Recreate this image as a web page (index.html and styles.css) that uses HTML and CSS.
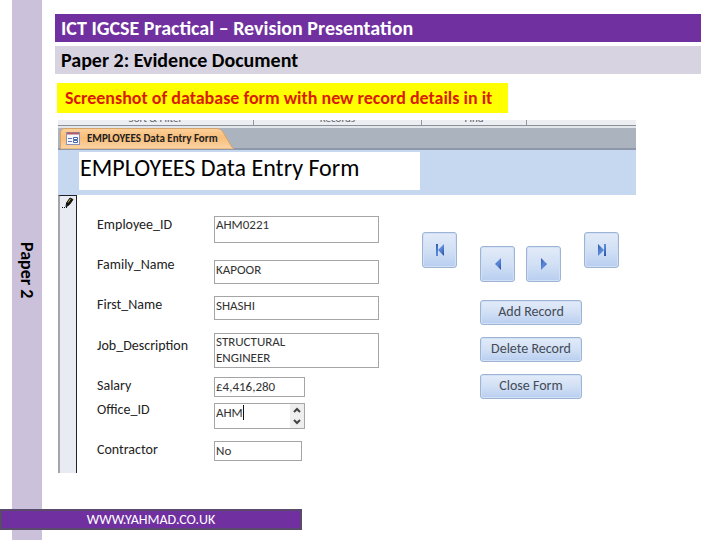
FILE: index.html
```html
<!DOCTYPE html>
<html lang="en">
<head>
<meta charset="utf-8">
<title>ICT IGCSE Practical – Revision Presentation</title>
<link rel="stylesheet" href="styles.css">
</head>
<body>
<div class="slide">
  <aside class="rail"><span>Paper 2</span></aside>
  <main class="content">
    <h1 class="bar bar-title">ICT IGCSE Practical – Revision Presentation</h1>
    <h2 class="bar bar-sub">Paper 2: Evidence Document</h2>
    <p class="note">Screenshot of database form with new record details in it</p>
    <section class="window">
      <div class="ribbon">
        <span class="group group-sort">Sort &amp; Filter</span>
        <span class="group group-records">Records</span>
        <span class="group group-find">Find</span>
      </div>
      <div class="tabs">
        <div class="tab">
          <svg class="tab-shape" viewBox="0 0 174 21" preserveAspectRatio="none" aria-hidden="true">
            <defs>
              <linearGradient id="tabfill" x1="0" y1="0" x2="0" y2="1">
                <stop offset="0" stop-color="#fbd09a"/><stop offset=".45" stop-color="#f8bd79"/><stop offset="1" stop-color="#fbd5a6"/>
              </linearGradient>
              <linearGradient id="arrowfill" x1="0" y1="0" x2="1" y2="1">
                <stop offset="0" stop-color="#2f58ac"/><stop offset=".5" stop-color="#5d8bdc"/><stop offset="1" stop-color="#274d9c"/>
              </linearGradient>
            </defs>
            <path d="M.5 21V5Q.5.5 5 .5H157Q161 .5 163 4L170 16Q172 20 174 21Z" fill="url(#tabfill)" stroke="#d6a36a"/>
          </svg>
          <svg class="tab-icon" viewBox="0 0 14 14" aria-hidden="true">
            <rect x=".5" y=".5" width="13" height="12" fill="#f5f7fc" stroke="#8d91b5"/>
            <path d="M1 1.500H13" stroke="#b55a62" stroke-width="2"/>
            <path d="M2 6.500H6M2 9.500H6" stroke="#6275a8"/>
            <path d="M7.500 5.500H11.500V7.500H7.500ZM7.500 8.500H11.500V10.500H7.500Z" fill="#fff" stroke="#4964a8"/>
          </svg>
          <span class="tab-text">EMPLOYEES Data Entry Form</span>
        </div>
      </div>
      <header class="form-head"><h3 class="form-title">EMPLOYEES Data Entry Form</h3></header>
      <div class="form-body">
        <div class="selector">
          <svg class="pencil" viewBox="0 0 14 14" aria-hidden="true">
            <path d="M5 11L5.500 7L9 2L12 3.500L8.500 8.500Z" fill="#111" stroke="#111"/>
            <path d="M7 6.500L9.500 3" stroke="#c9b83f"/>
            <path d="M1 11.500H2M3 11.500H4M5 11.500H6" stroke="#111"/>
          </svg>
        </div>
        <form class="fields">
          <div class="row row-id"><label for="id">Employee_ID</label><input id="id" value="AHM0221"></div>
          <div class="row row-family"><label for="family">Family_Name</label><input id="family" value="KAPOOR"></div>
          <div class="row row-first"><label for="first">First_Name</label><input id="first" value="SHASHI"></div>
          <div class="row row-job"><label for="job">Job_Description</label><textarea id="job">STRUCTURAL
ENGINEER</textarea></div>
          <div class="row row-salary"><label for="salary">Salary</label><input id="salary" value="£4,416,280"></div>
          <div class="row row-office"><label for="office">Office_ID</label>
            <div class="spin">
              <input id="office" value="AHM"><span class="caret"></span>
              <div class="spin-buttons">
                <button type="button" aria-label="Previous office"><svg viewBox="0 0 8 6"><path d="M1 5L4 2L7 5"/></svg></button>
                <button type="button" aria-label="Next office"><svg viewBox="0 0 8 6"><path d="M1 1L4 4L7 1"/></svg></button>
              </div>
            </div>
          </div>
          <div class="row row-contractor"><label for="contractor">Contractor</label><input id="contractor" value="No"></div>
        </form>
        <div class="controls">
          <div class="nav">
            <button type="button" aria-label="First record"><svg viewBox="0 0 12 12"><path d="M2 0H4V12H2ZM10 0V12L4 6Z"/></svg></button>
            <button type="button" class="inner" aria-label="Previous record"><svg viewBox="0 0 12 12"><path d="M9 0V12L3 6Z"/></svg></button>
            <button type="button" class="inner next" aria-label="Next record"><svg viewBox="0 0 12 12"><path d="M3 0V12L9 6Z"/></svg></button>
            <button type="button" aria-label="Last record"><svg viewBox="0 0 12 12"><path d="M2 0V12L8 6ZM8 0H10V12H8Z"/></svg></button>
          </div>
          <div class="actions">
            <button type="button">Add Record</button>
            <button type="button">Delete Record</button>
            <button type="button">Close Form</button>
          </div>
        </div>
      </div>
    </section>
  </main>
  <footer class="footer">WWW.YAHMAD.CO.UK</footer>
</div>
</body>
</html>
```
FILE: styles.css
```css
* { box-sizing: border-box; }
body { margin: 0; background: #fff; color: #000; font-family: Carlito, Lato, sans-serif; }
h1, h2, h3, p { margin: 0; }
input, textarea, button { margin: 0; font: inherit; color: inherit; }
.slide { position: relative; display: flex; min-height: 100vh; padding-left: 12px; }
.rail { flex: none; width: 30px; display: flex; align-items: center; justify-content: center; background: #ccc1da; font-size: 18px; font-weight: bold; }
.rail span { writing-mode: vertical-rl; }
.content { flex: 1; min-width: 0; padding: 14px 19px 64px 13px; }
.bar { height: 28px; padding-left: 6px; font-size: 20px; line-height: 28px; font-weight: bold; }
.bar-title { background: #7030a0; color: #fff; }
.bar-sub { margin-top: 4px; background: #d7d3e0; }
.note { width: fit-content; margin: 9px 0 7px 2px; padding: 0 16px 0 8px; background: #ff0; color: #d91c00; font-size: 18px; line-height: 30px; font-weight: bold; }
.window { margin: 0 65px 0 3px; font-size: 14px; }
.ribbon { display: flex; height: 8px; overflow: hidden; background: #eceef2; border-bottom: 2px solid #e2e5ea; box-shadow: inset 0 -1px #8b919b; }
.group { display: flex; align-items: flex-end; justify-content: center; height: 5px; font-size: 11px; line-height: 12px; color: #555b66; border-right: 1px solid #9298a2; }
.group-sort { flex: 0 0 196px; }
.group-records { flex: 0 0 168px; }
.group-find { flex: 0 0 105px; }
.tabs { height: 22px; background: #abb3bf; border-bottom: 2px solid #8e98a8; }
.tab { position: relative; display: flex; align-items: center; gap: 7px; width: 174px; height: 21px; margin-left: 2px; padding-left: 6px; }
.tab-shape { position: absolute; inset: 0; width: 100%; height: 100%; }
.tab-icon { position: relative; flex: none; width: 14px; height: 14px; }
.tab-text { position: relative; font-size: 11px; font-weight: bold; white-space: nowrap; color: #222; }
.form-head { padding: 2px 0 5px 21px; background: #c6d8ef; }
.form-title { width: 341px; padding: 0 0 6px 1px; background: #fff; font-size: 24px; line-height: 32px; font-weight: normal; }
.form-body { display: flex; align-items: stretch; }
.selector { flex: none; width: 19px; background: #e8ebf2; border-left: 2px solid #a2a5ab; border-right: 1px solid #20222b; border-top: 1px solid #20222b; }
.pencil { display: block; width: 14px; height: 14px; margin-left: 1px; }
.fields { flex: none; width: 302px; padding: 21px 0 12px 20px; color: #333; }
.row { display: flex; align-items: flex-start; }
.row label { flex: none; width: 117px; line-height: 18px; color: #222; }
.row input, .row textarea { display: block; width: 165px; height: 24px; padding: 0 1px 6px; border: 1px solid #a5a5a5; border-radius: 0; background: #fff; font-size: 13px; line-height: 16px; outline: 0; resize: none; overflow: hidden; }
.row-id { margin-bottom: 17px; }
.row-id input { height: 27px; padding-bottom: 10px; }
.row-family { margin-bottom: 12px; }
.row-family label { line-height: 10px; }
.row-first { margin-bottom: 13px; }
.row-job { margin-bottom: 9px; }
.row-job label { padding-top: 4px; }
.row-job textarea { height: 35px; padding-bottom: 0; }
.row-salary { margin-bottom: 6px; }
.row-salary input { width: 91px; height: 20px; padding-bottom: 2px; }
.row-office { margin-bottom: 12px; }
.row-office label { line-height: 14px; }
.row .spin { position: relative; display: flex; width: 91px; height: 26px; border: 1px solid #a5a5a5; }
.row .spin input { flex: 1; min-width: 0; height: 24px; padding-bottom: 8px; border: 0; }
.caret { position: absolute; left: 28px; top: 1px; width: 1px; height: 15px; background: #111; }
.spin-buttons { display: flex; flex-direction: column; width: 14px; background: #eee; }
.spin-buttons button { flex: 1; display: flex; align-items: center; justify-content: center; padding: 0; border: 0; background: none; }
.spin-buttons svg { width: 8px; height: 6px; fill: none; stroke: #444; stroke-width: 2; }
.row-contractor input { width: 88px; height: 20px; padding-bottom: 2px; }
.controls { padding: 37px 0 0 43px; color: #444b57; }
.controls button { border: 1px solid #9eb4d4; border-radius: 3px; background: linear-gradient(#e2ebf8, #d2e0f5 50%, #b8cef0); box-shadow: inset 0 0 0 1px #d2e0f5; }
.nav { display: flex; align-items: flex-start; gap: 23px; }
.nav button { display: flex; align-items: center; justify-content: center; width: 35px; height: 36px; padding: 0; }
.nav .inner { margin-top: 14px; }
.nav .next { margin-left: -12px; }
.nav svg { width: 12px; height: 12px; fill: url(#arrowfill); }
.actions { display: flex; flex-direction: column; gap: 12px; margin: 18px 0 0 58px; }
.actions button { width: 102px; height: 25px; padding: 0 0 2px; }
.footer { position: absolute; left: 0; bottom: 10px; width: 302px; border: 2px solid #5a4a6b; background: #7030a0; color: #fff; font-size: 14px; line-height: 17px; text-align: center; }
```
